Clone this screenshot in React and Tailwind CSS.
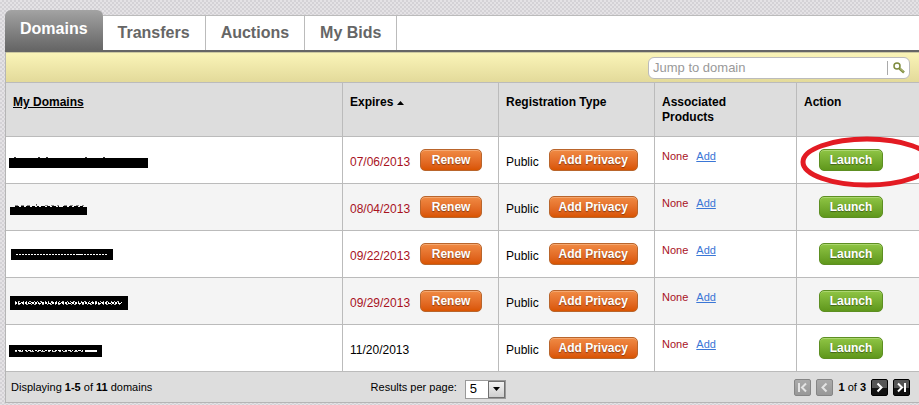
import React, { useState } from 'react';

const tabs = ['Transfers', 'Auctions', 'My Bids'];

const domains = [
  { id: 1, expires: '07/06/2013', soon: true },
  { id: 2, expires: '08/04/2013', soon: true },
  { id: 3, expires: '09/22/2013', soon: true },
  { id: 4, expires: '09/29/2013', soon: true },
  { id: 5, expires: '11/20/2013', soon: false }
];

// Blacked out domain names, one drawing per row
const masks = {
  1: (
    <>
      <rect x="3" y="21" width="139" height="10" />
      <path d="M8 20.5h2M32 20.5h2M40 20.5h2M79 20.5h2M97 20.5h2" stroke="#333" />
    </>
  ),
  2: (
    <>
      <rect x="4" y="23" width="77" height="8" />
      <path d="M9 22.5h24M35 22.5h18M57 22.5h22" stroke="#000" strokeDasharray="4 2 3 2" />
      <path d="M9 21.5h18M30 21.5h1M39 21.5h14M58 21.5h20" stroke="#888" strokeDasharray="3 3" />
      <path d="M30 20.5h1" stroke="#555" />
    </>
  ),
  3: (
    <>
      <rect x="5" y="18" width="102" height="11" />
      <path d="M10 23.5h61M78 23.5h24" stroke="#fff" strokeDasharray="2 1" />
      <path d="M71 23.5h6" stroke="#fff" />
    </>
  ),
  4: (
    <>
      <rect x="4" y="18" width="118" height="14" />
      <path d="M9 23.5h107" stroke="#bbb" strokeDasharray="1 2 2 3 1 2" />
      <path d="M9 24.5h107" stroke="#fff" strokeDasharray="2 1 1 2 3 1" />
      <path d="M9 25.5h107" stroke="#fff" strokeDasharray="2 1 3 1 2 1" />
      <path d="M9 26.5h107" stroke="#aaa" strokeDasharray="1 2 2 3" />
    </>
  ),
  5: (
    <>
      <rect x="3" y="20" width="93" height="12" />
      <path d="M9 25.5h68" stroke="#fff" strokeDasharray="2 1 3 1 1 2" />
      <path d="M9 26.5h68" stroke="#ccc" strokeDasharray="2 2 4 3" />
      <path d="M79 26h12" stroke="#fff" strokeWidth="2" />
    </>
  )
};

const Button = ({ children, className }) => (
  <button
    type="button"
    className={`h-[22px] rounded-[5px] border pb-px text-xs leading-5 font-bold text-white [text-shadow:0_1px_1px_rgba(0,0,0,0.4)] ${className}`}
  >
    {children}
  </button>
);

const orange = 'border-[#b9652c] bg-linear-to-b from-[#f08a43] to-[#d95400] shadow-[inset_0_1px_0_#f5a76f]';
const green = 'border-[#5d8f22] bg-linear-to-b from-[#8fc544] to-[#5f971b] shadow-[inset_0_1px_0_#abd66f]';

const PageButton = ({ label, disabled, d }) => (
  <button
    type="button"
    aria-label={label}
    disabled={disabled}
    className={
      disabled
        ? 'h-[17px] w-[17px] rounded-xs border border-[#858585] bg-linear-to-b from-[#aaa] to-[#989898] text-[#e4e4e4]'
        : 'h-[17px] w-[17px] rounded-xs border border-black bg-linear-to-b from-[#555] from-50% to-[#111] to-50% text-white'
    }
  >
    <svg width="15" height="15" viewBox="0 0 15 15" fill="none" stroke="currentColor" strokeWidth="2">
      <path d={d} />
    </svg>
  </button>
);

const App = () => {
  const [search, setSearch] = useState('');
  const [perPage, setPerPage] = useState('5');

  return (
    <div className="min-h-screen bg-[#dfdde0] bg-[repeating-conic-gradient(#d4d2d6_0_25%,#e4e2e5_0_50%)] bg-size-[4px_4px] pt-2.5 pl-[5px] font-['Liberation_Sans',Arial,sans-serif] text-xs text-black">
      {/* Tabs */}
      <nav className="flex items-end border-b-2 border-[#666]">
        <a href="#domains" className="h-10 rounded-t-md bg-linear-to-b from-[#a3a3a3] to-[#666] px-[15px] text-base leading-[38px] font-bold text-white">
          Domains
        </a>
        <div className="flex h-[35px] flex-1 border-t border-[#bbb] bg-white">
          {tabs.map((tab) => (
            <a key={tab} href="#tab" className="border-r border-[#bbb] px-[15px] text-base leading-[34px] font-bold text-[#666]">
              {tab}
            </a>
          ))}
        </div>
      </nav>

      <div className="border-b border-l border-[#b5b5b5]">
        {/* Search bar */}
        <div className="flex h-[31px] items-center justify-end border-t border-b border-t-[#ccc8a0] border-b-[#bbb] bg-linear-to-b from-[#faf4b8] to-[#e3da9a] pr-[9px]">
          <form className="flex h-[22px] w-[262px] items-center rounded-md border border-[#bbb] bg-white" onSubmit={(e) => e.preventDefault()}>
            <input
              type="text"
              aria-label="Jump to domain"
              placeholder="Jump to domain"
              value={search}
              onChange={(e) => setSearch(e.target.value)}
              className="min-w-0 flex-1 px-1 text-[13px] leading-5 outline-none placeholder:text-[#999]"
            />
            <button type="submit" aria-label="Search" className="flex h-3.5 w-[22px] items-center justify-center border-l border-[#aaa]">
              <svg width="12" height="12" viewBox="0 0 12 12" fill="none" stroke="#7d8a3c">
                <circle cx="4" cy="4" r="3" strokeWidth="1.5" />
                <path d="M6.5 6.5l4.5 4" strokeWidth="2.5" />
                <path d="M7 6.5l3.5 3.2" stroke="#d5dca0" strokeWidth="0.7" />
              </svg>
            </button>
          </form>
        </div>

        {/* Domains table */}
        <table className="w-full table-fixed border-separate border-spacing-0 bg-white text-left">
          <colgroup>
            <col />
            <col className="w-[156px]" />
            <col className="w-[156px]" />
            <col className="w-[142px]" />
            <col className="w-[123px]" />
          </colgroup>
          <thead className="bg-[#ddd]">
            <tr className="h-[54px] align-top leading-[15px] [&>th]:border-b [&>th]:border-[#bbb] [&>th]:px-[7px] [&>th]:pt-3 [&>th+th]:border-l">
              <th><a href="#sort" className="underline">My Domains</a></th>
              <th>
                <span className="flex items-center gap-1">
                  Expires
                  <svg width="7" height="4" viewBox="0 0 7 4"><path d="M3.5 0L7 4H0z" /></svg>
                </span>
              </th>
              <th>Registration Type</th>
              <th>Associated<br />Products</th>
              <th>Action</th>
            </tr>
          </thead>
          <tbody>
            {domains.map((domain) => (
              <tr key={domain.id} className="h-[47px] even:bg-[#f4f4f4] [&>td]:border-b [&>td]:border-[#bbb] [&>td+td]:border-l [&>td+td]:px-[7px]">
                <td>
                  <svg width="150" height="46" viewBox="0 0 150 46" className="block" role="img" aria-label="Hidden domain" shapeRendering="crispEdges">
                    {masks[domain.id]}
                  </svg>
                </td>
                <td>
                  <div className={`flex items-center gap-2.5 ${domain.soon ? 'text-[#a8121d]' : 'text-black'}`}>
                    <span className="pt-1 leading-4">{domain.expires}</span>
                    {domain.soon && <Button className={`w-[62px] ${orange}`}>Renew</Button>}
                  </div>
                </td>
                <td>
                  <div className="flex items-center gap-2.5">
                    <span className="pt-1 leading-4">Public</span>
                    <Button className={`w-[89px] ${orange}`}>Add Privacy</Button>
                  </div>
                </td>
                <td>
                  <div className="flex gap-2 pb-2 text-[11px] leading-4">
                    <span className="text-[#a8121d]">None</span>
                    <a href="#add" className="text-[#3a76d6] underline">Add</a>
                  </div>
                </td>
                <td>
                  <Button className={`ml-[15px] block w-16 ${green}`}>Launch</Button>
                </td>
              </tr>
            ))}
          </tbody>
        </table>

        {/* Footer */}
        <div className="flex h-[30px] items-center bg-[#ddd] pr-[9px] pl-[5px] text-[11px]">
          <div className="w-[40%]">
            Displaying <b>1-5</b> of <b>11</b> domains
          </div>
          <div className="flex flex-1 items-center gap-2">
            <label htmlFor="per-page">Results per page:</label>
            <span className="relative mt-1">
              <select
                id="per-page"
                value={perPage}
                onChange={(e) => setPerPage(e.target.value)}
                className="block h-[19px] w-[41px] appearance-none border border-[#999] bg-white pl-1 text-[13px] leading-4"
              >
                <option>5</option>
                <option>10</option>
                <option>25</option>
              </select>
              <span className="pointer-events-none absolute top-px right-px flex h-[17px] w-[17px] items-center justify-center border border-[#707070] bg-linear-to-b from-[#f2f2f2] to-[#cfcfcf]">
                <svg width="7" height="4" viewBox="0 0 7 4"><path d="M0 0h7L3.5 4z" /></svg>
              </span>
            </span>
          </div>
          <div className="flex items-center gap-[5px]">
            <PageButton label="First page" disabled d="M4 3v9M11 3.5l-4 4 4 4" />
            <PageButton label="Previous page" disabled d="M9.5 3.5l-4 4 4 4" />
            <span className="leading-4"><b>1</b> of <b>3</b></span>
            <PageButton label="Next page" d="M5.5 3.5l4 4-4 4" />
            <PageButton label="Last page" d="M4 3.5l4 4-4 4M11 3v9" />
          </div>
        </div>
      </div>

      {/* Highlight around the first Launch button */}
      <div className="pointer-events-none absolute inset-x-0 top-[135px] flex h-[53px] justify-end overflow-hidden">
        <svg width="120" height="53" viewBox="0 0 120 53" fill="none">
          <ellipse cx="68" cy="27" rx="64" ry="23" stroke="#e31b23" strokeWidth="5" />
        </svg>
      </div>
    </div>
  );
};

export default App;
